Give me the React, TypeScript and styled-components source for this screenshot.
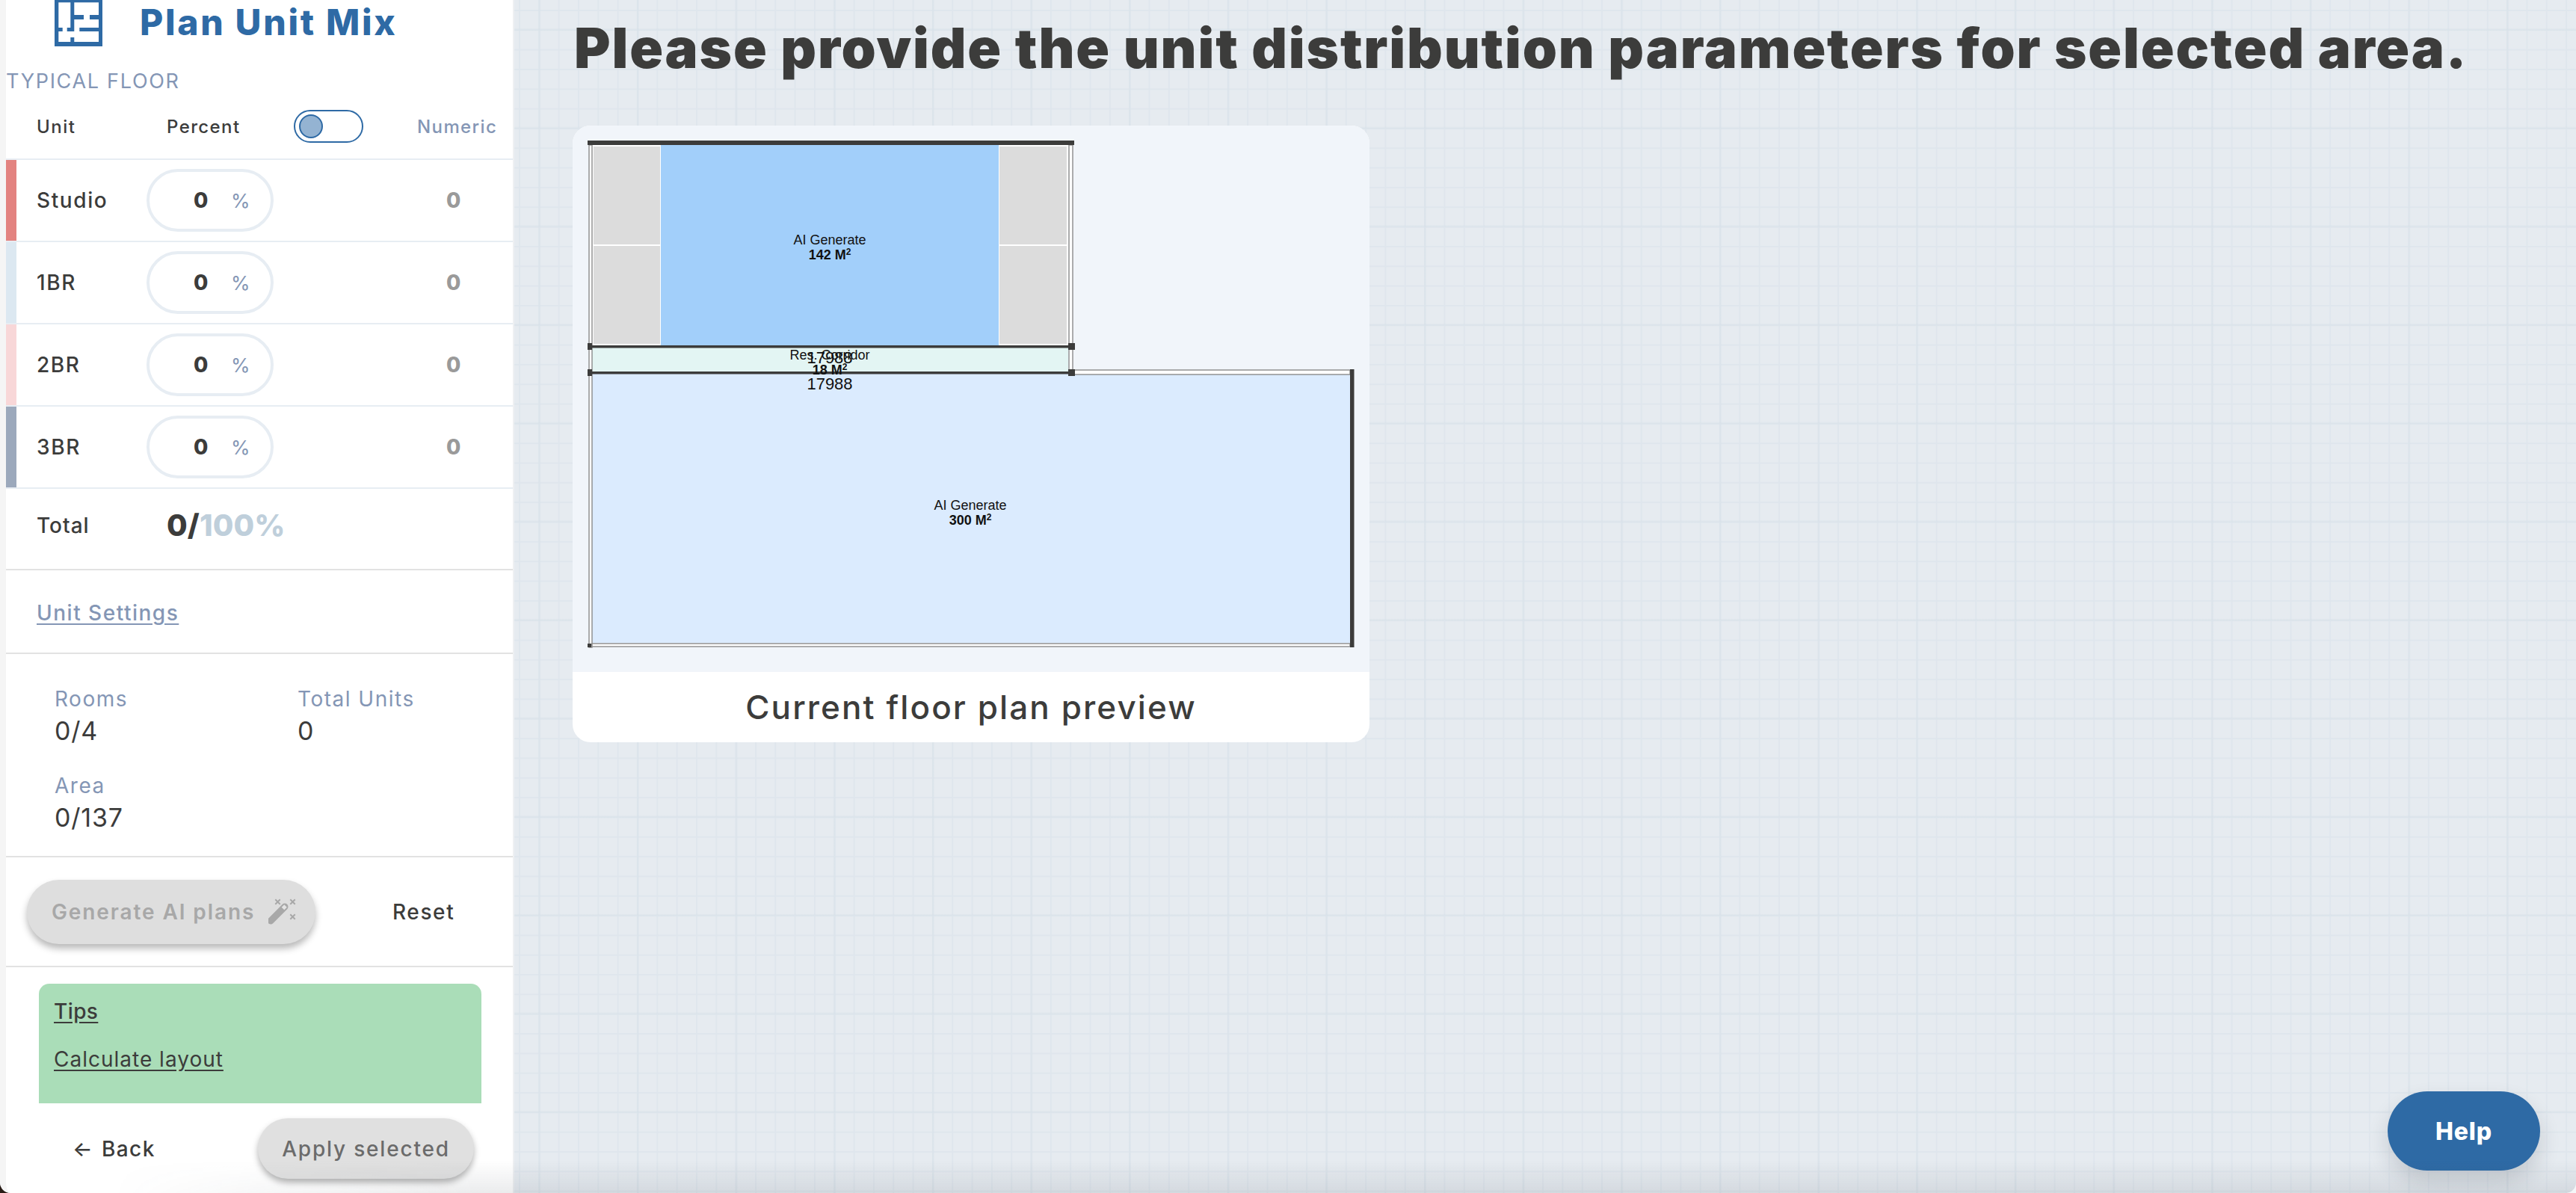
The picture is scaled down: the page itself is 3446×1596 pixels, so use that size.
import React from "react";
import styled, { createGlobalStyle } from "styled-components";

const GlobalStyle = createGlobalStyle`
  html, body {
    margin: 0;
    padding: 0;
    background: linear-gradient(to right, #2a1c16 50%, #f4f6f8 50%);
  }
  * { box-sizing: border-box; }
`;

const FONT = `Inter, "Noto Sans", "Liberation Sans", sans-serif`;
const INK = "#3c3c3b";
const BLUE = "#2e6aa5";
const SLATE = "#8496b5";

const Page = styled.div`
  position: relative;
  display: flex;
  width: 3446px;
  height: 1596px;
  overflow: hidden;
  border-radius: 0 0 14px 14px;
  font-family: ${FONT};
  color: ${INK};
  background-color: #e6ebf0;
  background-image:
    linear-gradient(to right, rgba(214, 224, 232, 0.35) 3px, transparent 3px),
    linear-gradient(to bottom, rgba(214, 224, 232, 0.35) 3px, transparent 3px),
    linear-gradient(to right, #dfe6ed 2px, transparent 2px),
    linear-gradient(to bottom, #dfe6ed 2px, transparent 2px);
  background-size: 131.65px 131.65px, 131.65px 131.65px, 26.33px 26.33px, 26.33px 26.33px;
  background-position: 62px 38px, 62px 38px, 9.5px 13px, 9.5px 13px;

  &::after {
    content: "";
    position: absolute;
    left: 0;
    right: 0;
    bottom: 0;
    height: 44px;
    pointer-events: none;
    background: linear-gradient(to bottom, rgba(60, 70, 80, 0), rgba(60, 70, 80, 0.1));
    mask-image: linear-gradient(to right, transparent 150px, black 640px);
  }
`;

const Sidebar = styled.aside`
  flex: none;
  display: flex;
  flex-direction: column;
  width: 688px;
  height: 1596px;
  background: #fff;
  border-left: 8px solid #f5f5f5;
  border-right: 2px solid #eef0f2;
  border-bottom-left-radius: 14px;
`;

const Brand = styled.header`
  display: flex;
  align-items: flex-start;
  gap: 50px;
  height: 97px;
  padding-left: 65px;
`;

const BrandName = styled.h1`
  margin: 7px 0 0;
  font-size: 48px;
  line-height: 46px;
  font-weight: 800;
  letter-spacing: 2.7px;
  white-space: nowrap;
  color: ${BLUE};
`;

const FloorLabel = styled.div`
  height: 29px;
  font-size: 27px;
  line-height: 24px;
  letter-spacing: 1.7px;
  white-space: nowrap;
  color: ${SLATE};
`;

const ModeRow = styled.div`
  display: flex;
  align-items: center;
  height: 88px;
  padding-left: 41px;
  font-size: 24px;
  font-weight: 500;
  border-bottom: 2px solid #e7edf3;
`;

const UnitHead = styled.span`
  width: 174px;
  letter-spacing: 1.5px;
`;

const PercentHead = styled.span`
  width: 170px;
  letter-spacing: 1.4px;
`;

const Toggle = styled.span`
  display: flex;
  align-items: center;
  width: 93px;
  height: 44px;
  padding-left: 5px;
  margin-right: 72px;
  border: 2px solid ${BLUE};
  border-radius: 22px;
`;

const Knob = styled.span`
  width: 32px;
  height: 32px;
  border-radius: 50%;
  background: #94b3d2;
  border: 2px solid ${BLUE};
`;

const NumericHead = styled.span`
  color: ${SLATE};
  letter-spacing: 1.4px;
`;

const UnitRow = styled.div`
  display: flex;
  align-items: center;
  height: 110px;
  border-bottom: 2px solid #e7edf3;
`;

const Swatch = styled.span<{ $color: string }>`
  align-self: stretch;
  width: 14px;
  background: ${(p) => p.$color};
`;

const UnitName = styled.span`
  width: 174px;
  padding-left: 27px;
  font-size: 28px;
  font-weight: 500;
  letter-spacing: 1.6px;
`;

const PercentInput = styled.div`
  display: flex;
  align-items: center;
  width: 170px;
  height: 84px;
  padding-left: 59px;
  border: 4px solid #e7edf3;
  border-radius: 42px;
`;

const PercentValue = styled.b`
  width: 50px;
  font-size: 28px;
  font-weight: 800;
`;

const PercentSign = styled.span`
  font-size: 26px;
  color: ${SLATE};
`;

const NumericValue = styled.b`
  margin-left: 231px;
  font-size: 28px;
  font-weight: 800;
  color: #9a9a9a;
`;

const TotalRow = styled.div`
  display: flex;
  align-items: center;
  height: 109px;
  padding-left: 41px;
  padding-bottom: 10px;
  border-bottom: 2px solid #e2e2e2;
`;

const TotalName = styled.span`
  width: 174px;
  font-size: 28px;
  font-weight: 500;
  letter-spacing: 1px;
`;

const TotalValue = styled.span`
  font-size: 40px;
  font-weight: 800;
  letter-spacing: 0.1px;
`;

const TotalMax = styled.span`
  color: #bfcfdb;
`;

const SettingsRow = styled.div`
  display: flex;
  align-items: center;
  height: 112px;
  padding: 4px 0 0 41px;
  border-bottom: 2px solid #e2e2e2;
`;

const SettingsLink = styled.a`
  font-size: 28px;
  font-weight: 500;
  letter-spacing: 1.5px;
  color: ${SLATE};
  text-decoration: underline;
  text-underline-offset: 4px;
`;

const Stats = styled.section`
  display: grid;
  grid-template-columns: 325px 1fr;
  grid-auto-rows: 116px;
  align-content: start;
  height: 272px;
  padding: 42px 0 0 65px;
  border-bottom: 2px solid #e2e2e2;
`;

const StatLabel = styled.div`
  font-size: 28px;
  line-height: 36px;
  color: ${SLATE};
  letter-spacing: 1.5px;
`;

const StatValue = styled.div`
  margin-top: 4px;
  font-size: 34px;
  line-height: 42px;
  font-weight: 400;
  letter-spacing: 0.8px;
`;

const Actions = styled.div`
  display: flex;
  align-items: center;
  height: 147px;
  padding-left: 28px;
  border-bottom: 2px solid #e2e2e2;
`;

const GenerateButton = styled.button`
  display: flex;
  align-items: center;
  gap: 18px;
  width: 386px;
  height: 86px;
  padding: 0 0 0 33px;
  border: none;
  border-radius: 43px;
  background: #dedede;
  color: #a8a8a8;
  font: 600 28px ${FONT};
  letter-spacing: 1.9px;
  white-space: nowrap;
  box-shadow: 0 6px 10px rgba(0, 0, 0, 0.28);
`;

const ResetButton = styled.button`
  margin-left: 103px;
  padding: 0;
  border: none;
  background: none;
  color: ${INK};
  font: 500 28px ${FONT};
  letter-spacing: 1.6px;
`;

const Tips = styled.section`
  flex: none;
  height: 160px;
  margin: 22px 42px 0 44px;
  padding: 20px 20px 0;
  background: #aaddb8;
  border-radius: 14px 14px 0 0;
`;

const TipsTitle = styled.a`
  display: block;
  height: 64px;
  font-size: 28px;
  line-height: 34px;
  font-weight: 500;
  letter-spacing: 0.4px;
  text-decoration: underline;
  text-underline-offset: 4px;
`;

const TipsLink = styled.a`
  display: block;
  font-size: 28px;
  line-height: 34px;
  letter-spacing: 1px;
  text-decoration: underline;
  text-underline-offset: 4px;
`;

const Footer = styled.footer`
  display: flex;
  align-items: center;
  height: 81px;
  margin-top: 20px;
  padding-left: 89px;
`;

const BackLink = styled.span`
  width: 248px;
  font-size: 28px;
  font-weight: 500;
  letter-spacing: 1.4px;
  word-spacing: 2px;
  white-space: nowrap;
`;

const ApplyButton = styled.button`
  width: 289px;
  height: 81px;
  padding: 0;
  border: none;
  border-radius: 41px;
  background: #e0e0e0;
  color: #6b6b6b;
  font: 500 28px ${FONT};
  letter-spacing: 1.8px;
  white-space: nowrap;
  box-shadow: 0 5px 9px rgba(0, 0, 0, 0.3);
`;

const Main = styled.main`
  flex: 1;
  padding: 26px 0 0 80px;
`;

const Heading = styled.h2`
  margin: 0;
  height: 74px;
  font-size: 74px;
  line-height: 76px;
  font-weight: 900;
  letter-spacing: 1.85px;
  white-space: nowrap;
`;

const PreviewCard = styled.figure`
  width: 1066px;
  margin: 68px 0 0 -2px;
  overflow: hidden;
  background: #fff;
  border-radius: 24px;
`;

const PlanFrame = styled.div`
  height: 731px;
  background: #f1f5fa;
`;

const PlanSvg = styled.svg`
  display: block;
  width: 1066px;
  height: 731px;
`;

const Caption = styled.figcaption`
  display: flex;
  align-items: center;
  justify-content: center;
  height: 94px;
  font-size: 44px;
  font-weight: 500;
  letter-spacing: 2.1px;
`;

const HelpButton = styled.button`
  position: absolute;
  right: 48px;
  bottom: 30px;
  width: 204px;
  height: 106px;
  border: none;
  border-radius: 53px;
  background: ${BLUE};
  color: #fff;
  font: 800 32px ${FONT};
  letter-spacing: 0.8px;
  box-shadow: 0 14px 28px rgba(30, 40, 50, 0.16);
`;

const LogoIcon = () => (
  <svg width="64" height="62" viewBox="0 0 64 62" style={{ flex: "none" }}>
    <path
      fill={BLUE}
      fillRule="evenodd"
      d="M0 0H64V62H0ZM5.3 3.3V56H21.3V50H26.3V56H59V42H33.3V37H59V26H47V20H59V3.3H26.3V20H39V26H26.3V42H16.7V37H21.3V3.3ZM5.3 37H10.7V42H5.3Z"
    />
  </svg>
);

const WandIcon = () => (
  <svg width="38" height="36" viewBox="0 0 38 36" style={{ flex: "none" }}>
    <g stroke="#a8a8a8" strokeWidth="2" strokeLinecap="square">
      <path d="M10 2 15 7M15 2 10 7M30 2 35 7M35 2 30 7M30 22 35 27M35 22 30 27" />
    </g>
    <path d="M3 30 22 11" stroke="#a8a8a8" strokeWidth="9" strokeLinecap="round" />
    <path d="M19.5 13.5 23 10" stroke="#e4e4e4" strokeWidth="5" />
  </svg>
);

const walls = "#3c3c3b";

const DoubleLine = ({ x, y, w, h }: { x: number; y: number; w: number; h: number }) => (
  <rect x={x} y={y} width={w} height={h} fill="#fff" stroke="#8a8a8a" strokeWidth="1.4" />
);

const RoomLabel = ({ x, y, name, area }: { x: number; y: number; name: string; area: string }) => (
  <>
    <text x={x} y={y} fontSize="18" textAnchor="middle" fill="#111">
      {name}
    </text>
    <text x={x} y={y + 20} fontSize="18" fontWeight="700" textAnchor="middle" fill="#111">
      {area} M<tspan fontSize="12" dy="-6">2</tspan>
    </text>
  </>
);

// page coordinates, easier to read off the reference
const FloorPlan = () => (
  <PlanSvg viewBox="766 168 1066 731" fontFamily="Liberation Sans, Arial, sans-serif">
    <rect x="792" y="500" width="1014" height="360" fill="#dbebfe" />
    <rect x="792" y="465" width="637" height="32" fill="#e3f5f3" />
    <rect x="884" y="194" width="452" height="268" fill="#a2cffa" />
    <rect x="792" y="194" width="92" height="268" fill="#fff" />
    <rect x="1336" y="194" width="93" height="268" fill="#fff" />
    <rect x="794" y="196" width="89" height="131" fill="#dcdcdc" />
    <rect x="794" y="329" width="89" height="131" fill="#dcdcdc" />
    <rect x="1337" y="196" width="90" height="131" fill="#dcdcdc" />
    <rect x="1337" y="329" width="90" height="131" fill="#dcdcdc" />

    <DoubleLine x={788} y={194} w={4} h={672} />
    <DoubleLine x={1430} y={194} w={5} h={306} />
    <DoubleLine x={1437} y={495} w={369} h={6} />
    <DoubleLine x={792} y={861} w={1014} h={4} />

    <rect x="786" y="188" width="651" height="6" fill={walls} />
    <rect x="786" y="462" width="651" height="3.5" fill={walls} />
    <rect x="786" y="497" width="651" height="3.5" fill={walls} />
    <rect x="786" y="459" width="6" height="9" fill={walls} />
    <rect x="786" y="494" width="6" height="9" fill={walls} />
    <rect x="1429" y="459" width="9" height="9" fill={walls} />
    <rect x="1429" y="494" width="9" height="9" fill={walls} />
    <rect x="1806" y="494" width="5.5" height="372" fill={walls} />
    <rect x="786" y="861" width="5" height="5" fill={walls} />

    <RoomLabel x={1110} y={327} name="AI Generate" area="142" />
    <RoomLabel x={1298} y={682} name="AI Generate" area="300" />
    <RoomLabel x={1110} y={481} name="Res. Corridor" area="18" />
    <text x="1110" y="486" fontSize="22" textAnchor="middle" fill="#111">17988</text>
    <text x="1110" y="521" fontSize="22" textAnchor="middle" fill="#111">17988</text>
  </PlanSvg>
);

const UNITS = [
  { name: "Studio", color: "#e38380" },
  { name: "1BR", color: "#dce8f1" },
  { name: "2BR", color: "#f8d7d8" },
  { name: "3BR", color: "#9ca9bc" },
];

export default function App() {
  return (
    <>
      <GlobalStyle />
      <Page>
        <Sidebar>
          <Brand>
            <LogoIcon />
            <BrandName>Plan Unit Mix</BrandName>
          </Brand>
          <FloorLabel>TYPICAL FLOOR</FloorLabel>
          <ModeRow>
            <UnitHead>Unit</UnitHead>
            <PercentHead>Percent</PercentHead>
            <Toggle>
              <Knob />
            </Toggle>
            <NumericHead>Numeric</NumericHead>
          </ModeRow>
          {UNITS.map((u) => (
            <UnitRow key={u.name}>
              <Swatch $color={u.color} />
              <UnitName>{u.name}</UnitName>
              <PercentInput>
                <PercentValue>0</PercentValue>
                <PercentSign>%</PercentSign>
              </PercentInput>
              <NumericValue>0</NumericValue>
            </UnitRow>
          ))}
          <TotalRow>
            <TotalName>Total</TotalName>
            <TotalValue>
              0/<TotalMax>100%</TotalMax>
            </TotalValue>
          </TotalRow>
          <SettingsRow>
            <SettingsLink>Unit Settings</SettingsLink>
          </SettingsRow>
          <Stats>
            <div>
              <StatLabel>Rooms</StatLabel>
              <StatValue>0/4</StatValue>
            </div>
            <div>
              <StatLabel>Total Units</StatLabel>
              <StatValue>0</StatValue>
            </div>
            <div>
              <StatLabel>Area</StatLabel>
              <StatValue>0/137</StatValue>
            </div>
          </Stats>
          <Actions>
            <GenerateButton>
              Generate AI plans
              <WandIcon />
            </GenerateButton>
            <ResetButton>Reset</ResetButton>
          </Actions>
          <Tips>
            <TipsTitle>Tips</TipsTitle>
            <TipsLink>Calculate layout</TipsLink>
          </Tips>
          <Footer>
            <BackLink>← Back</BackLink>
            <ApplyButton>Apply selected</ApplyButton>
          </Footer>
        </Sidebar>
        <Main>
          <Heading>Please provide the unit distribution parameters for selected area.</Heading>
          <PreviewCard>
            <PlanFrame>
              <FloorPlan />
            </PlanFrame>
            <Caption>Current floor plan preview</Caption>
          </PreviewCard>
        </Main>
        <HelpButton>Help</HelpButton>
      </Page>
    </>
  );
}
